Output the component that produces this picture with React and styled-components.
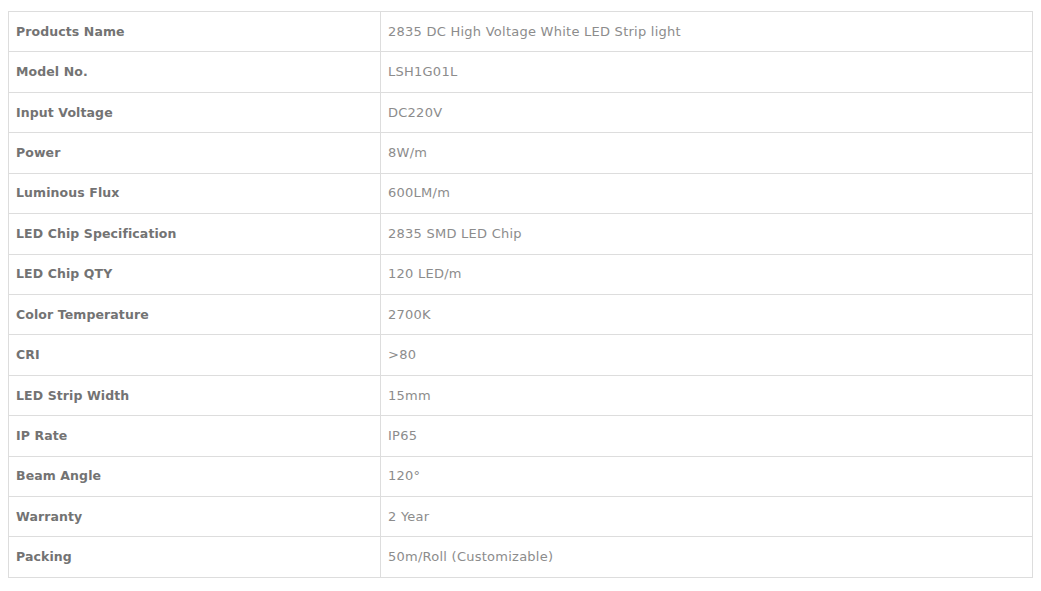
import React from "react";
import styled, { createGlobalStyle } from "styled-components";

const Global = createGlobalStyle`
  html, body { margin: 0; padding: 0; background: #fff; }
  body { padding: 11px 8px 0 8px; }
`;

const Table = styled.table`
  width: 1025px;
  border-collapse: collapse;
  font-family: "DejaVu Sans", "Liberation Sans", sans-serif;
`;

const Row = styled.tr`
  height: 40.43px;
`;

const Cell = styled.td`
  border: 1px solid #dddddd;
  padding: 0 7px 1px 7px;
  vertical-align: middle;
  font-size: ${(p) => (p.$label ? "12.5px" : "13px")};
  letter-spacing: ${(p) => (p.$label ? "0.1px" : "0.25px")};
  color: ${(p) => (p.$label ? "#737373" : "#8c8c8c")};
  font-weight: ${(p) => (p.$label ? 700 : 400)};
  width: ${(p) => (p.$label ? "357px" : "auto")};
`;

const rows = [
  ["Products Name", "2835 DC High Voltage White LED Strip light"],
  ["Model No.", "LSH1G01L"],
  ["Input Voltage", "DC220V"],
  ["Power", "8W/m"],
  ["Luminous Flux", "600LM/m"],
  ["LED Chip Specification", "2835 SMD LED Chip"],
  ["LED Chip QTY", "120 LED/m"],
  ["Color Temperature", "2700K"],
  ["CRI", ">80"],
  ["LED Strip Width", "15mm"],
  ["IP Rate", "IP65"],
  ["Beam Angle", "120°"],
  ["Warranty", "2 Year"],
  ["Packing", "50m/Roll (Customizable)"],
];

export default function App() {
  return (
    <>
      <Global />
      <Table>
        <tbody>
          {rows.map(([k, v]) => (
            <Row key={k}>
              <Cell $label>{k}</Cell>
              <Cell>{v}</Cell>
            </Row>
          ))}
        </tbody>
      </Table>
    </>
  );
}
